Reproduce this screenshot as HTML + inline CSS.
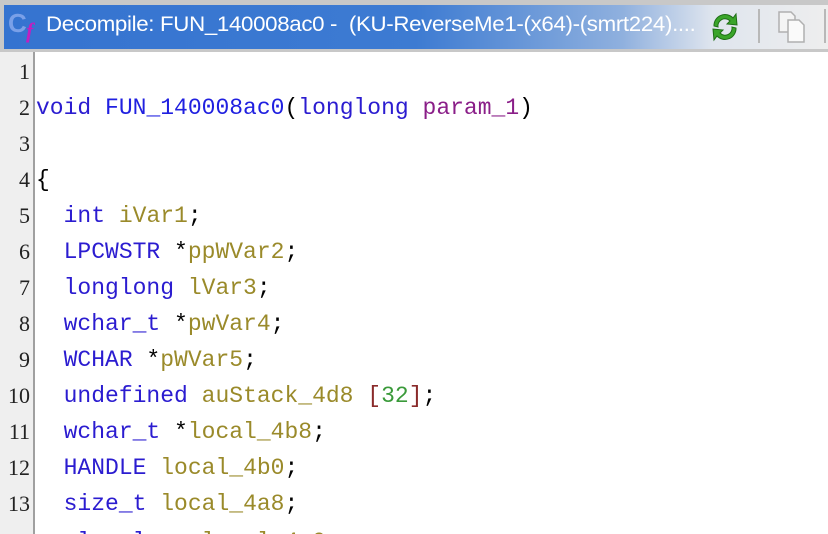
<!DOCTYPE html>
<html><head><meta charset="utf-8"><style>
html,body{margin:0;width:828px;height:534px;overflow:hidden}
body{background:#fff;position:relative;font-family:"Liberation Sans",sans-serif}
#tb{position:absolute;left:0;top:0;width:828px;height:52px;background:#c8c8c8}
#bar{position:absolute;left:4px;top:5px;width:824px;height:44px;background:linear-gradient(90deg,#3573d0 0%,#3d7bd2 50%,#8fb0de 75%,#dfe5ee 86%,#eeeeee 100%)}
#title{position:absolute;left:46px;top:13px;color:#fff;font-size:21px;white-space:nowrap;transform:scaleX(1.06);transform-origin:left;letter-spacing:-.3px}
#gut{position:absolute;left:0;top:52px;width:33px;height:482px;background:#efefef;border-right:2px solid #a0a0a0}
.ln{position:absolute;right:3px;font-size:22px;color:#222;font-family:"Liberation Serif",serif}
.cl{position:absolute;left:36px;font-family:"Liberation Mono",monospace;font-size:23px;white-space:pre;color:#000}
.k{color:#2b1cd0}.v{color:#9a8a2a}.p{color:#8a1e88}.n{color:#3a9a3a}.f{color:#2020e0}.b{color:#8a2a2a}
</style></head><body>
<div id="tb"><div id="bar"></div>
<div style="position:absolute;left:8px;top:10px;width:22px;height:26px;color:#7aa0e8;font-size:26px;font-weight:bold;line-height:26px">C</div>
<div style="position:absolute;left:26px;top:18px;color:#c020c0;font-size:22px;font-style:italic;font-weight:bold;font-family:'Liberation Serif',serif">f</div>
<div id="title">Decompile: FUN_140008ac0 -&nbsp; (KU-ReverseMe1-(x64)-(smrt224)....</div>
<svg style="position:absolute;left:706px;top:8px" width="38" height="38" viewBox="0 0 38 38">
<path d="M8 18 A11 11 0 0 1 27 10 L30 6 L31 17 L21 16 L24 13 A7 7 0 0 0 12 19 Z" fill="#3aa52a" stroke="#1f6e16" stroke-width="1"/>
<path d="M30 20 A11 11 0 0 1 11 28 L8 32 L7 21 L17 22 L14 25 A7 7 0 0 0 26 19 Z" fill="#3aa52a" stroke="#1f6e16" stroke-width="1"/></svg>
<div style="position:absolute;left:758px;top:9px;width:2px;height:34px;background:#b8b8b8"></div>
<svg style="position:absolute;left:776px;top:10px" width="34" height="34" viewBox="0 0 34 34">
<path d="M3 2h12l4 4v16H3z" fill="#f4f4f4" stroke="#b0b0b0" stroke-width="1.5"/>
<path d="M12 10h11l5 5v17H12z" fill="#fafafa" stroke="#b0b0b0" stroke-width="1.5"/></svg>
<div style="position:absolute;left:824px;top:9px;width:2px;height:34px;background:#b8b8b8"></div>
</div>
<div id="gut">
<div class="ln" style="top:7px">1</div><div class="ln" style="top:43px">2</div><div class="ln" style="top:79px">3</div><div class="ln" style="top:115px">4</div><div class="ln" style="top:151px">5</div><div class="ln" style="top:187px">6</div><div class="ln" style="top:223px">7</div><div class="ln" style="top:259px">8</div><div class="ln" style="top:295px">9</div><div class="ln" style="top:331px">10</div><div class="ln" style="top:367px">11</div><div class="ln" style="top:403px">12</div><div class="ln" style="top:439px">13</div><div class="ln" style="top:477px">14</div>
</div>
<div class="cl" style="top:95px"><span class="k">void</span> <span class="f">FUN_140008ac0</span>(<span class="k">longlong</span> <span class="p">param_1</span>)</div>
<div class="cl" style="top:167px">{</div>
<div class="cl" style="top:203px">  <span class="k">int</span> <span class="v">iVar1</span>;</div>
<div class="cl" style="top:239px">  <span class="k">LPCWSTR</span> *<span class="v">ppWVar2</span>;</div>
<div class="cl" style="top:275px">  <span class="k">longlong</span> <span class="v">lVar3</span>;</div>
<div class="cl" style="top:311px">  <span class="k">wchar_t</span> *<span class="v">pwVar4</span>;</div>
<div class="cl" style="top:347px">  <span class="k">WCHAR</span> *<span class="v">pWVar5</span>;</div>
<div class="cl" style="top:383px">  <span class="k">undefined</span> <span class="v">auStack_4d8</span> <span class="b">[</span><span class="n">32</span><span class="b">]</span>;</div>
<div class="cl" style="top:419px">  <span class="k">wchar_t</span> *<span class="v">local_4b8</span>;</div>
<div class="cl" style="top:455px">  <span class="k">HANDLE</span> <span class="v">local_4b0</span>;</div>
<div class="cl" style="top:491px">  <span class="k">size_t</span> <span class="v">local_4a8</span>;</div>
<div class="cl" style="top:529px">  <span class="k">ulonglong</span> <span class="v">local_4a0</span>;</div>
</body></html>
